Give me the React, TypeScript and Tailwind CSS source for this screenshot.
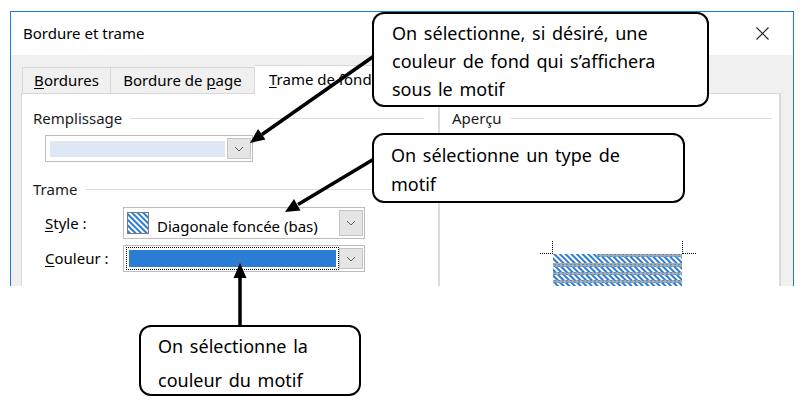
import React from "react";

function Chevron() {
  return (
    <svg width="10" height="6" viewBox="0 0 10 6">
      <polyline points="1,1 5,5 9,1" fill="none" stroke="#606060" strokeWidth="1" />
    </svg>
  );
}

function DropBtn() {
  return (
    <div className="w-[24px] self-stretch my-[2px] mr-[1px] bg-[#e5e5e5] border border-[#c4c4c4] flex items-center justify-center">
      <Chevron />
    </div>
  );
}

function GroupHeader({ label }: { label: string }) {
  return (
    <div className="h-[20px] flex items-center">
      <span className="text-[#1b1b1b]">{label}</span>
      <div className="flex-1 h-px bg-[#dcdcdc] ml-[8px]" />
    </div>
  );
}

function Swatch() {
  return (
    <svg width="22" height="22" viewBox="0 0 22 22">
      <defs>
        <pattern id="diag" width="4" height="4" patternUnits="userSpaceOnUse" patternTransform="rotate(45)">
          <rect width="4" height="4" fill="#ffffff" />
          <rect width="4" height="2" fill="#2b7cd3" />
        </pattern>
      </defs>
      <rect x="0.5" y="0.5" width="21" height="21" fill="url(#diag)" stroke="#7a7a7a" />
    </svg>
  );
}

function Preview() {
  return (
    <svg width="170" height="50" viewBox="0 0 170 50" className="block ml-[94px] mt-[110px]">
      <defs>
        <pattern id="pdiag" width="4" height="4" patternUnits="userSpaceOnUse" patternTransform="rotate(45)">
          <rect width="4" height="4" fill="#ffffff" />
          <rect width="4" height="2" fill="#2b7cd3" />
        </pattern>
        <pattern id="pgrey" width="4" height="2" patternUnits="userSpaceOnUse">
          <rect width="4" height="2" fill="#a9a9a9" />
          <rect width="2" height="1" fill="#4b8ed6" />
        </pattern>
      </defs>
      <line x1="18.5" y1="3" x2="18.5" y2="16" stroke="#000" strokeDasharray="1 1" />
      <line x1="6" y1="15.5" x2="18" y2="15.5" stroke="#000" strokeDasharray="1 1" />
      <line x1="148.5" y1="3" x2="148.5" y2="16" stroke="#000" strokeDasharray="1 1" />
      <line x1="149" y1="15.5" x2="162" y2="15.5" stroke="#000" strokeDasharray="1 1" />
      <rect x="19" y="16" width="129" height="34" fill="url(#pdiag)" />
      <rect x="63" y="16" width="85" height="3" fill="url(#pgrey)" />
      <rect x="19" y="25" width="129" height="4" fill="url(#pgrey)" />
      <rect x="19" y="34" width="129" height="3" fill="url(#pgrey)" />
      <rect x="19" y="42" width="129" height="3" fill="url(#pgrey)" />
    </svg>
  );
}

export default function App() {
  return (
    <div className="relative w-[810px] h-[409px] bg-white overflow-hidden font-['Noto_Sans',sans-serif]">
      {/* Dialog */}
      <div className="ml-[10px] mt-[11px] w-[784px] h-[275px] border-x border-t border-[#1c7dd6] flex flex-col overflow-hidden text-[15px] text-black">
        <div className="h-[43px] shrink-0 bg-white flex items-center pl-[12px] pr-[24px]">
          <span>Bordure et trame</span>
          <svg width="13" height="13" viewBox="0 0 13 13" className="ml-auto">
            <line x1="0.5" y1="0.5" x2="12.5" y2="12.5" stroke="#222" strokeWidth="1.1" />
            <line x1="12.5" y1="0.5" x2="0.5" y2="12.5" stroke="#222" strokeWidth="1.1" />
          </svg>
        </div>
        <div className="flex-1 bg-[#f0f0f0] pl-[10px] pr-[12px] pt-[10px] flex flex-col">
          {/* Tabs */}
          <div className="h-[28px] flex items-end shrink-0 relative">
            <div className="ml-[1px] w-[88px] h-[26px] border-t border-l border-[#d9d9d9] flex items-center justify-center">
              <span><span className="underline underline-offset-[2px]">B</span>ordures</span>
            </div>
            <div className="w-[145px] h-[26px] border-t border-l border-r border-[#d9d9d9] flex items-center justify-center">
              <span>Bordure de <span className="underline underline-offset-[2px]">p</span>age</span>
            </div>
            <div className="w-[140px] h-[29px] -mb-px bg-white border-t border-r border-[#d9d9d9] flex items-center pl-[14px] pb-[2px]">
              <span><span className="underline underline-offset-[2px]">T</span>rame de fond</span>
            </div>
          </div>
          {/* Panel */}
          <div className="flex-1 bg-white border-t border-l border-r-2 border-[#d9d9d9] flex">
            <div className="w-[416px] pl-[11px] pr-[14px] pt-[14px]">
              <GroupHeader label="Remplissage" />
              <div className="ml-[12px] mt-[7px] w-[208px] h-[27px] border border-[#bcbcbc] bg-white flex items-center">
                <div className="ml-[4px] w-[175px] h-[16px] bg-[#dde8f4]" />
                <div className="flex-1" />
                <DropBtn />
              </div>
              <div className="mt-[17px]">
                <GroupHeader label="Trame" />
              </div>
              <div className="mt-[8px] ml-[12px] flex items-center">
                <div className="w-[78px]">
                  <span><span className="underline underline-offset-[2px]">S</span>tyle :</span>
                </div>
                <div className="w-[242px] h-[32px] border border-[#bcbcbc] bg-white flex items-center">
                  <div className="ml-[3px] flex items-center">
                    <Swatch />
                  </div>
                  <span className="ml-[8px] mt-[6px]">Diagonale foncée (bas)</span>
                  <div className="flex-1" />
                  <DropBtn />
                </div>
              </div>
              <div className="mt-[6px] ml-[12px] flex items-center">
                <div className="w-[78px]">
                  <span><span className="underline underline-offset-[2px]">C</span>ouleur :</span>
                </div>
                <div className="w-[242px] h-[27px] border border-[#bcbcbc] bg-white flex items-center">
                  <div className="ml-[2px] w-[215px] h-[23px] border border-dotted border-black p-[2px]">
                    <div className="w-full h-full bg-[#2b7cd3]" />
                  </div>
                  <div className="flex-1" />
                  <DropBtn />
                </div>
              </div>
            </div>
            <div className="flex-1 border-l-2 border-[#dcdcdc] pl-[12px] pr-[7px] pt-[14px]">
              <GroupHeader label="Aperçu" />
              <div className="-ml-[12px]">
                <Preview />
              </div>
            </div>
          </div>
        </div>
      </div>

      {/* Arrows */}
      <svg className="absolute inset-0 pointer-events-none" width="810" height="409" viewBox="0 0 810 409">
        <line x1="374" y1="56" x2="262" y2="134.5" stroke="#000" strokeWidth="3.5" />
        <polygon points="250,143 265.5,139.5 258,129" fill="#000" />
        <line x1="374" y1="159" x2="298" y2="204.5" stroke="#000" strokeWidth="3.5" />
        <polygon points="285,212 300.5,210.5 294,199" fill="#000" />
        <line x1="240" y1="327" x2="240" y2="276" stroke="#000" strokeWidth="3.5" />
        <polygon points="240,263 233.5,278 246.5,278" fill="#000" />
      </svg>

      {/* Callouts */}
      <div className="absolute left-[372px] top-[12px] w-[337px] h-[95px] bg-white border-2 border-black rounded-[12px] pl-[18px] pt-[5px] text-[18px] leading-[28px] [word-spacing:2px] text-black">
        <div>On sélectionne, si désiré, une</div>
        <div>couleur de fond qui s’affichera</div>
        <div>sous le motif</div>
      </div>
      <div className="absolute left-[372px] top-[133px] w-[313px] h-[70px] bg-white border-2 border-black rounded-[12px] pl-[17px] pt-[6px] text-[18px] leading-[29px] [word-spacing:2px] text-black">
        <div>On sélectionne un type de</div>
        <div>motif</div>
      </div>
      <div className="absolute left-[139px] top-[325px] w-[222px] h-[71px] bg-white border-2 border-black rounded-[12px] pl-[17px] pt-[2px] text-[18px] leading-[34px] [word-spacing:2px] text-black">
        <div>On sélectionne la</div>
        <div>couleur du motif</div>
      </div>
    </div>
  );
}
